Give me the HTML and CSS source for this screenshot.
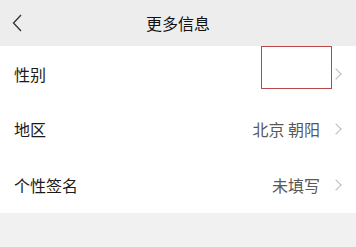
FILE: index.html
```html
<!DOCTYPE html>
<html lang="zh-CN">
<head>
    <meta charset="utf-8">
    <meta name="viewport" content="width=device-width, initial-scale=1.0">
    <title>更多信息</title>
    <link rel="stylesheet" href="styles.css">
</head>
<body>
    <div class="header">
        <span class="back">
            <svg width="10" height="18" viewBox="0 0 10 18"><path d="M9 1 L1.5 9 L9 17" fill="none" stroke="#333" stroke-width="1.3"/></svg>
        </span>
        <h1>更多信息</h1>
    </div>

    <div class="list">
        <div class="row">
            <span class="label">性别</span>
            <span class="value"></span>
            <span class="arrow"></span>
            <div class="mark"></div>
        </div>
        <div class="row">
            <span class="label">地区</span>
            <span class="value">北京 朝阳</span>
            <span class="arrow"></span>
        </div>
        <div class="row">
            <span class="label">个性签名</span>
            <span class="value">未填写</span>
            <span class="arrow"></span>
        </div>
    </div>
</body>
</html>
```

FILE: styles.css
```css
body {
    margin: 0;
    width: 356px;
    height: 247px;
    background: #f1f1f1;
    font-family: "Noto Sans CJK SC", "Noto Sans", sans-serif;
    overflow: hidden;
}
.header {
    height: 46px;
    background: #ededed;
    display: flex;
    align-items: center;
    justify-content: center;
    position: relative;
}
.back {
    position: absolute;
    left: 12px;
    top: 14px;
    display: flex;
}
h1 {
    margin: 0;
    font-size: 16px;
    font-weight: 400;
    color: #111;
}
.list {
    background: #fff;
}
.row {
    height: 55.5px;
    display: flex;
    align-items: center;
    padding: 0 14px 0 14px;
    position: relative;
}
.label {
    flex: 1;
    font-size: 16px;
    color: #1a1a1a;
}
.value {
    font-size: 16px;
    color: #595959;
    margin-right: 12px;
}
.arrow {
    width: 7px;
    height: 7px;
    border-top: 1.2px solid #bbb;
    border-right: 1.2px solid #bbb;
    transform: rotate(45deg);
    margin-right: 2px;
}
.mark {
    position: absolute;
    left: 261px;
    top: 0;
    width: 69px;
    height: 41px;
    border: 1px solid #b8484a;
}
```
